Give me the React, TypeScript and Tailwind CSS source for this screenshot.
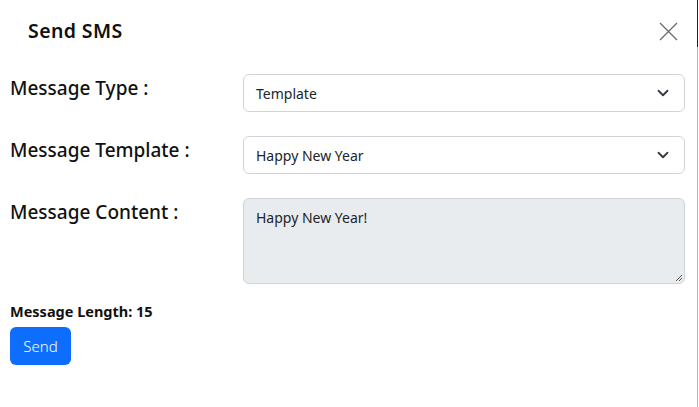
import React from "react";

const Chevron = () => (
  <svg width="12" height="12" viewBox="0 0 16 16" className="shrink-0 mr-[3px]">
    <path d="M2 5l6 6 6-6" fill="none" stroke="#343a40" strokeWidth="2.4" strokeLinecap="round" strokeLinejoin="round" />
  </svg>
);

export default function App() {
  return (
    <div className="flex w-[699px] h-[407px] bg-white overflow-hidden" style={{ fontFamily: '"Noto Sans", "Open Sans", sans-serif' }}>
      <div className="flex-1 flex flex-col">
        <div className="flex items-center justify-between h-[62px] pl-[28px] pr-[19px]">
          <h1 className="text-[19.5px] font-semibold text-[#111] tracking-[0.4px]">Send SMS</h1>
          <svg width="19" height="19" viewBox="0 0 19 19">
            <path d="M1 1l17 17M18 1L1 18" stroke="#6b6b6b" strokeWidth="1.3" fill="none" />
          </svg>
        </div>
        <div className="flex flex-col pl-[10px] pr-[12px] pt-[12px]">
          <div className="flex mb-[24px]">
            <div className="w-[233px] text-[19px] font-medium text-[#111]">Message Type :</div>
            <div className="flex-1 h-[38px] border border-[#ced4da] rounded-[6px] flex items-center justify-between pl-[12px] pr-[12px] text-[14px] text-[#212529]">
              <span>Template</span>
              <Chevron />
            </div>
          </div>
          <div className="flex mb-[24px]">
            <div className="w-[233px] text-[19px] font-medium text-[#111]">Message Template :</div>
            <div className="flex-1 h-[38px] border border-[#ced4da] rounded-[6px] flex items-center justify-between pl-[12px] pr-[12px] text-[14px] text-[#212529]">
              <span>Happy New Year</span>
              <Chevron />
            </div>
          </div>
          <div className="flex mb-[17px]">
            <div className="w-[233px] text-[19px] font-medium text-[#111]">Message Content :</div>
            <div className="relative flex-1 h-[86px] border border-[#ced4da] rounded-[6px] bg-[#e9ecef] pl-[12px] pt-[8px] text-[14px] text-[#212529]">
              <span>Happy New Year!</span>
              <svg width="8" height="8" viewBox="0 0 8 8" className="absolute right-[1px] bottom-[1px]">
                <path d="M7 1L1 7M7 4L4 7" stroke="#555" strokeWidth="1" />
              </svg>
            </div>
          </div>
          <div className="text-[14.5px] font-bold text-[#111] mb-[4px]">Message Length: 15</div>
          <div>
            <button className="h-[38px] w-[61px] rounded-[6px] bg-[#0d6efd] text-white text-[15px] font-light">Send</button>
          </div>
        </div>
      </div>
      <div className="w-[1px] flex flex-col mr-[1px]">
        <div className="h-[47px] bg-[#222]" />
        <div className="flex-1 bg-[#b5b5b5]" />
      </div>
    </div>
  );
}
